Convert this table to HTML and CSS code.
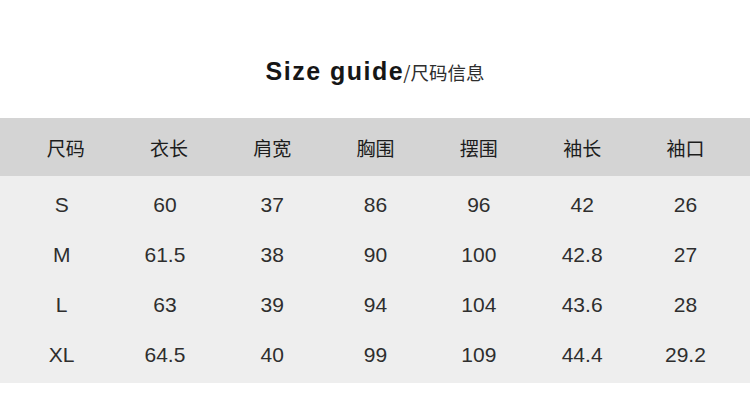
FILE: index.html
```html
<!DOCTYPE html>
<html lang="zh">
<head>
<meta charset="utf-8">
<link rel="stylesheet" href="styles.css">
</head>
<body>
<div class="page">
  <h1 class="title"><span class="en">Size guide</span><span class="cn">/尺码信息</span></h1>
  <div class="table">
    <div class="head">
      <span>尺码</span><span>衣长</span><span>肩宽</span><span>胸围</span><span>摆围</span><span>袖长</span><span>袖口</span>
    </div>
    <div class="body">
      <div class="row"><span>S</span><span>60</span><span>37</span><span>86</span><span>96</span><span>42</span><span>26</span></div>
      <div class="row"><span>M</span><span>61.5</span><span>38</span><span>90</span><span>100</span><span>42.8</span><span>27</span></div>
      <div class="row"><span>L</span><span>63</span><span>39</span><span>94</span><span>104</span><span>43.6</span><span>28</span></div>
      <div class="row"><span>XL</span><span>64.5</span><span>40</span><span>99</span><span>109</span><span>44.4</span><span>29.2</span></div>
    </div>
  </div>
</div>
</body>
</html>
```
FILE: styles.css
```css
html, body {
  margin: 0;
  padding: 0;
  background: #ffffff;
}
body {
  width: 750px;
  height: 412px;
  overflow: hidden;
  font-family: "Liberation Sans", "Noto Sans CJK SC", sans-serif;
  color: #2a2a2a;
}
.page {
  display: flex;
  flex-direction: column;
}
.title {
  margin: 0;
  height: 118px;
  box-sizing: border-box;
  padding-top: 59px;
  display: flex;
  justify-content: center;
  align-items: baseline;
  line-height: 25px;
}
.title .en {
  font-family: "Liberation Sans", sans-serif;
  font-weight: bold;
  font-size: 25px;
  letter-spacing: 1.5px;
  color: #161616;
}
.title .cn {
  font-family: "Noto Sans CJK SC", sans-serif;
  font-weight: normal;
  font-size: 18.5px;
  line-height: 25px;
  color: #2e2e2e;
  margin-left: -1px;
}
.head, .row {
  display: grid;
  grid-template-columns: repeat(7, 103.3px);
  padding-left: 14px;
}
.head span, .row span {
  text-align: center;
}
.head {
  background: #d4d4d4;
  height: 58px;
  align-items: center;
  font-family: "Noto Sans CJK SC", sans-serif;
  font-size: 19px;
  color: #1c1c1c;
}
.body {
  background: #eeeeee;
  padding: 4px 0 3px;
}
.row {
  height: 50px;
  align-items: center;
  font-size: 21px;
  color: #2e2e2e;
}
.row span:nth-child(-n+2) {
  padding-right: 8px;
}
```
